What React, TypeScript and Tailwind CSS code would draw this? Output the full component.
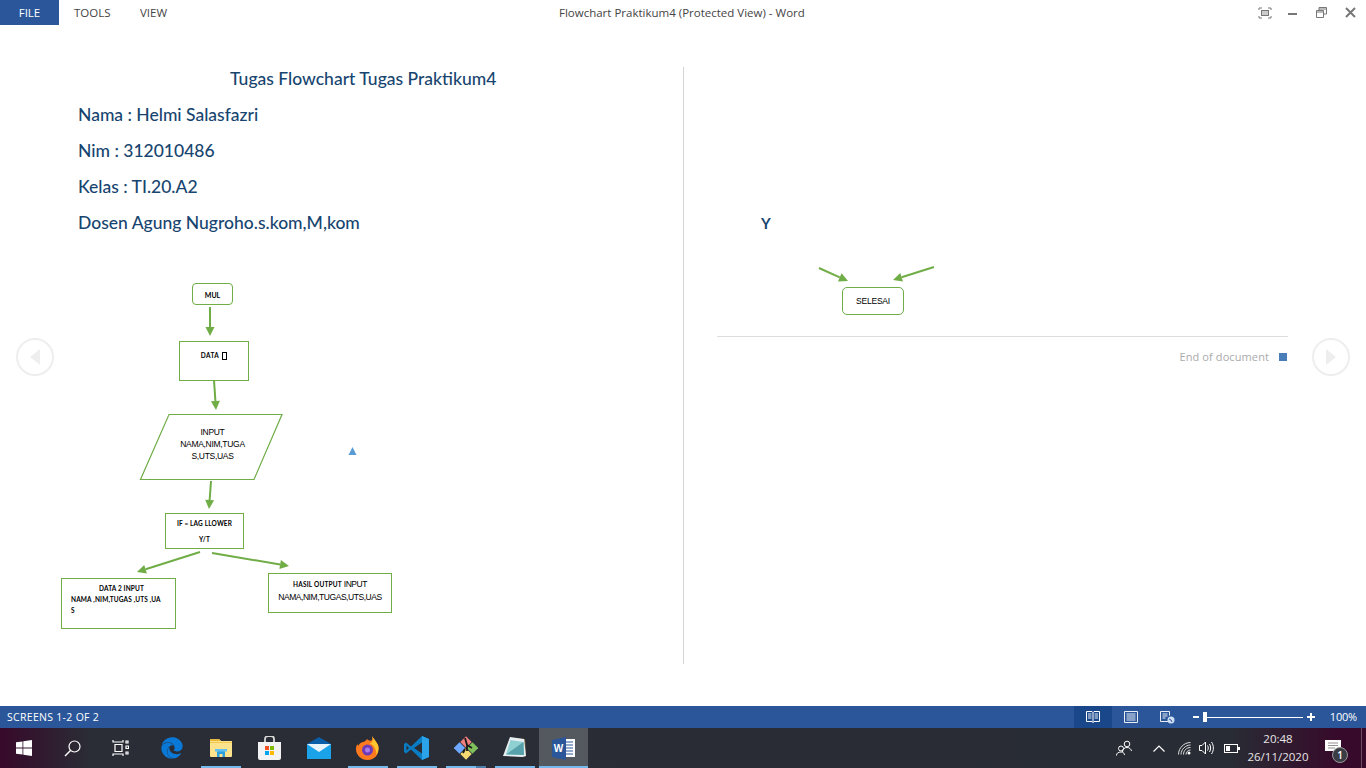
import React from 'react';
import { FaEdge } from 'react-icons/fa';

const Arrow = ({ x1, y1, x2, y2 }: { x1: number; y1: number; x2: number; y2: number }) => {
  const a = Math.atan2(y2 - y1, x2 - x1);
  const len = 9;
  const w = 4.5;
  const bx = x2 - Math.cos(a) * len;
  const by = y2 - Math.sin(a) * len;
  const nx = -Math.sin(a) * w;
  const ny = Math.cos(a) * w;
  return (
    <g>
      <line x1={x1} y1={y1} x2={bx} y2={by} stroke="#70ad47" strokeWidth="2" />
      <polygon points={`${x2},${y2} ${bx + nx},${by + ny} ${bx - nx},${by - ny}`} fill="#70ad47" />
    </g>
  );
};

const NavCircle = ({ dir }: { dir: 'left' | 'right' }) => (
  <div className="flex h-[38px] w-[38px] items-center justify-center rounded-full border-2 border-[#eeeeee] bg-white">
    <svg width="12" height="18" viewBox="0 0 12 18">
      <polygon points={dir === 'left' ? '11,1 11,17 1,9' : '1,1 1,17 11,9'} fill="#eeeeee" />
    </svg>
  </div>
);

const TaskCell = ({ children, active, bar, split }: { children: React.ReactNode; active?: boolean; bar?: boolean; split?: boolean }) => (
  <div className={active ? 'relative flex h-full w-[49px] items-center justify-center bg-[#54585f]' : 'relative flex h-full w-[49px] items-center justify-center'}>
    {children}
    {bar && <div className={active ? 'absolute bottom-0 left-0 h-0.5 w-full bg-[#76b9ed]' : 'absolute bottom-0 left-[5px] h-0.5 w-10 bg-[#76b9ed]'} />}
    {split && <div className="absolute bottom-0 left-[35px] h-0.5 w-[10px] bg-[#4b7ea8]" />}
  </div>
);

export default function App() {
  return (
    <div className="relative flex h-[768px] w-[1366px] flex-col overflow-hidden bg-white font-['Open_Sans',sans-serif]">
      {/* Title bar */}
      <div className="flex h-[25px] shrink-0 items-center">
        <div className="flex h-full w-[59px] items-center justify-center bg-[#2b579a] text-[11.5px] text-white">FILE</div>
        <div className="ml-[15px] w-[37px] whitespace-nowrap text-[11.5px] text-[#444444]">TOOLS</div>
        <div className="ml-[29px] w-[27px] whitespace-nowrap text-[11.5px] text-[#444444]">VIEW</div>
        <div className="ml-[392px] w-[245px] whitespace-nowrap text-center text-[11.5px] text-[#444444]">Flowchart Praktikum4 (Protected View) - Word</div>
        <div className="ml-auto flex items-center pr-[10px]">
          <svg width="14" height="12" viewBox="0 0 14 12" className="mr-[16px]">
            <path d="M1 3V1h3M10 1h3v2M13 9v2h-3M4 11H1V9" fill="none" stroke="#777" />
            <rect x="3.5" y="3.5" width="7" height="5" fill="#ccc" stroke="#777" />
          </svg>
          <svg width="10" height="10" viewBox="0 0 10 10" className="mr-[18px]">
            <rect x="0" y="5" width="9" height="2" fill="#777" />
          </svg>
          <svg width="11" height="11" viewBox="0 0 11 11" className="mr-[18px]">
            <path d="M.5 3.500h7v7h-7zM.5 5h7M3 3V.5h7.500V7H8M3 2h7.500" fill="none" stroke="#777" />
          </svg>
          <svg width="11" height="11" viewBox="0 0 11 11">
            <path d="M1 1l9 9M10 1l-9 9" stroke="#777" strokeWidth="2" />
          </svg>
        </div>
      </div>

      {/* Document */}
      <div className="relative flex min-h-0 flex-1">
        {/* Left page */}
        <div className="w-[683px] shrink-0 pt-9 font-['Lato',sans-serif] font-medium text-[#17456f]">
          <div className="flex h-9 items-center pl-[230px] text-[17.5px]">Tugas Flowchart Tugas Praktikum4</div>
          <div className="flex h-9 items-center pl-[78px] text-[17.5px]">Nama : Helmi Salasfazri</div>
          <div className="flex h-9 items-center pl-[78px] text-[17.5px]">Nim : 312010486</div>
          <div className="flex h-9 items-center pl-[78px] text-[17.5px]">Kelas : TI.20.A2</div>
          <div className="flex h-9 items-center pl-[78px] text-[17.5px]">Dosen Agung Nugroho.s.kom,M,kom</div>

          {/* Flowchart canvas: y here is page y minus 241 */}
          <div className="relative h-[420px] font-normal text-black">
            <svg className="absolute left-0 top-0" width="420" height="420" viewBox="0 241 420 420">
              <Arrow x1={210} y1={307} x2={210} y2={336} />
              <Arrow x1={214} y1={380} x2={216} y2={410} />
              <polygon points="169,414.5 282,414.5 254,479.5 140.5,479.5" fill="none" stroke="#70ad47" strokeWidth="1.2" />
              <Arrow x1={211} y1={481} x2={209} y2={509} />
              <Arrow x1={200} y1={552} x2={137} y2={572} />
              <Arrow x1={212} y1={553} x2={289} y2={566} />
              <polygon points="352.5,447 356.5,455 348.5,455" fill="#5b9bd5" />
            </svg>
            <div className="absolute left-[192px] top-[42px] flex h-[22px] w-[41px] items-center justify-center rounded-[4px] border border-[#70ad47] pt-[2px] text-[7px] font-bold">MUL</div>
            <div className="absolute left-[179px] top-[100px] flex h-[40px] w-[70px] items-start justify-center border border-[#70ad47] pt-[8px] text-[6.5px] font-bold leading-[12px] tracking-[0.4px]">
              DATA
              <span className="ml-[3px] mt-[2px] inline-block h-[8px] w-[5px] border border-black" />
            </div>
            <div className="absolute left-[160px] top-[185px] w-[105px] text-center font-['Liberation_Sans',sans-serif] text-[8.5px] leading-[12px] tracking-[-0.3px]">
              <div>INPUT</div>
              <div>NAMA,NIM,TUGA</div>
              <div>S,UTS,UAS</div>
            </div>
            <div className="absolute left-[165px] top-[272px] h-[36px] w-[79px] border border-[#70ad47] pt-[4px] text-center text-[6.5px] font-bold leading-[12px] tracking-[0.15px]">
              <div>IF = LAG LLOWER</div>
              <div className="mt-[4px]">Y/T</div>
            </div>
            <div className="absolute left-[61px] top-[337px] h-[51px] w-[115px] whitespace-nowrap border border-[#70ad47] pl-[9px] pt-[4px] text-[6.5px] font-bold leading-[11px] tracking-[0.15px]">
              <div className="pl-[28px]">DATA 2 INPUT</div>
              <div>NAMA ,NIM,TUGAS ,UTS ,UA</div>
              <div>S</div>
            </div>
            <div className="absolute left-[268px] top-[332px] h-[40px] w-[124px] border border-[#70ad47] pt-[4px] text-center font-['Liberation_Sans',sans-serif] text-[8.5px] leading-[12px] tracking-[-0.45px]">
              <div><span className="font-['Lato',sans-serif] text-[6.5px] font-bold tracking-[0.2px]">HASIL OUTPUT</span> INPUT</div>
              <div>NAMA,NIM,TUGAS,UTS,UAS</div>
            </div>
          </div>
        </div>

        <div className="mt-[42px] h-[597px] w-px shrink-0 bg-[#d4d4d4]" />

        {/* Right page */}
        <div className="flex-1 pl-[33px] pt-[180px]">
          <div className="w-[571px]">
            <div className="flex h-9 items-center pl-[44px] font-['Lato',sans-serif] text-[15px] font-bold text-[#17456f]">Y</div>
            <div className="relative h-[96px] border-b border-[#dddddd]">
              <svg className="absolute left-0 top-0" width="300" height="60" viewBox="717 241 300 60">
                <Arrow x1={819} y1={268} x2={848} y2={281} />
                <Arrow x1={934} y1={267} x2={893} y2={280} />
              </svg>
              <div className="absolute left-[125px] top-[46px] flex h-[28px] w-[62px] items-center justify-center rounded-[5px] border border-[#70ad47] font-['Liberation_Sans',sans-serif] text-[8.5px] tracking-[-0.2px] text-black">SELESAI</div>
            </div>
            <div className="flex h-10 items-center justify-end pr-px">
              <span className="mr-[10px] text-[11px] tracking-[0.1px] text-[#aaaaaa]">End of document</span>
              <div className="h-2 w-2 bg-[#4a7ebb]" />
            </div>
          </div>
        </div>

        {/* Page nav arrows */}
        <div className="absolute left-4 top-[313px]"><NavCircle dir="left" /></div>
        <div className="absolute left-[1312px] top-[313px]"><NavCircle dir="right" /></div>
      </div>

      {/* Status bar */}
      <div className="flex h-[22px] shrink-0 items-center bg-[#2b579a] text-white">
        <div className="pl-[7px] pt-px text-[10.5px] tracking-[0.3px]">SCREENS 1-2 OF 2</div>
        <div className="ml-auto flex h-full items-center">
          <div className="flex h-full w-[38px] items-center justify-center bg-[#19478a]">
            <svg width="14" height="12" viewBox="0 0 14 12" fill="none" stroke="#fff">
              <path d="M.5.5h5.500L7 1.500 8 .5h5.500v10H8L7 11.500 6 10.500H.5zM7 1.500v10" />
              <path d="M2 3h3.500M2 5h3.500M2 7h3.500M8.500 3H12M8.500 5H12M8.500 7H12" strokeWidth="0.9" />
            </svg>
          </div>
          <div className="flex h-full w-[38px] items-center justify-center">
            <svg width="14" height="12" viewBox="0 0 14 12" fill="none" stroke="#fff">
              <path d="M.5.5h13v11H.5zM2.500 3h9M2.500 5h9M2.500 7h9M2.500 9h9" strokeWidth="0.9" />
            </svg>
          </div>
          <div className="flex h-full w-[36px] items-center justify-center">
            <svg width="15" height="13" viewBox="0 0 15 13" fill="none" stroke="#fff">
              <path d="M8 10.500H.5V.5h9v4M2.500 3h5M2.500 5h5M2.500 7h3" strokeWidth="0.9" />
              <circle cx="11" cy="9" r="3.500" fill="#cfe0f5" stroke="none" />
              <path d="M9 8l2 1 1 2" stroke="#2b579a" strokeWidth="1" />
            </svg>
          </div>
          <div className="ml-[7px] h-0.5 w-[6px] bg-white" />
          <div className="relative ml-[4px] flex h-full w-[100px] items-center">
            <div className="h-px w-full bg-white" />
            <div className="absolute left-0 top-[6px] h-[10px] w-[4px] bg-white" />
          </div>
          <svg width="8" height="8" viewBox="0 0 8 8" className="ml-[4px]">
            <path d="M0 4h8M4 0v8" stroke="#fff" strokeWidth="2" />
          </svg>
          <div className="ml-[15px] pr-[9px] text-[11px] tracking-[-0.2px]">100%</div>
        </div>
      </div>

      {/* Taskbar */}
      <div className="flex h-10 shrink-0 items-center bg-[linear-gradient(90deg,#37092a_0px,#2a2d35_90px,#282c34_1230px,#37092a_1340px,#37092a_100%)] text-white">
        <div className="flex h-full w-12 items-center justify-center">
          <svg width="16" height="16" viewBox="0 0 16 16" fill="#fff">
            <path d="M0 2.300l6.500-.9v6.200H0zM7.300 1.300L16 0v7.600H7.300zM0 8.400h6.500v6.200L0 13.700zM7.300 8.400H16V16l-8.700-1.200z" />
          </svg>
        </div>
        <div className="flex h-full w-12 items-center justify-center">
          <svg width="17" height="17" viewBox="0 0 17 17" fill="none" stroke="#fff" strokeWidth="1.200">
            <circle cx="10.500" cy="6.500" r="5.500" />
            <path d="M6.500 10.500L1 16" strokeWidth="1.500" />
          </svg>
        </div>
        <div className="flex h-full w-[51px] items-center justify-center pr-[3px]">
          <svg width="17" height="16" viewBox="0 0 17 16" fill="none" stroke="#fff" strokeWidth="1.200">
            <path d="M1 0v2h10V0M3 4.500h7v7H3zM1 16v-2h10v2M14 1h2v2h-2zM14 6h2.500v2.500H14zM14 12h2v2h-2z" />
          </svg>
        </div>
        <TaskCell>
          <FaEdge size={22} color="#0a78d6" />
        </TaskCell>
        <TaskCell bar>
          <svg width="22" height="20" viewBox="0 0 22 20">
            <path d="M0 1h9l2 2h11v15a1 1 0 0 1-1 1H1a1 1 0 0 1-1-1z" fill="#ffe38c" />
            <path d="M0 1h9l2 2H0z" fill="#e8b83e" />
            <rect x="0" y="4" width="22" height="1" fill="#f2c94f" />
            <path d="M7 19v-5a1 1 0 0 1 1-1h6a1 1 0 0 1 1 1v5h-2.500v-3h-3v3z" fill="#2c9fe0" />
            <rect x="5" y="11" width="12" height="2.500" fill="#60c0f0" />
          </svg>
        </TaskCell>
        <TaskCell>
          <svg width="23" height="24" viewBox="0 0 23 24">
            <path d="M7 7V3a3 3 0 0 1 3-3h3a3 3 0 0 1 3 3v4" fill="none" stroke="#d8d8d8" strokeWidth="1.800" />
            <path d="M0 6h23v16a2 2 0 0 1-2 2H2a2 2 0 0 1-2-2z" fill="#f3f3f3" />
            <rect x="7" y="10" width="4" height="4" fill="#f25022" />
            <rect x="12" y="10" width="4" height="4" fill="#7fba00" />
            <rect x="7" y="15" width="4" height="4" fill="#00a4ef" />
            <rect x="12" y="15" width="4" height="4" fill="#ffb900" />
          </svg>
        </TaskCell>
        <TaskCell>
          <svg width="24" height="22" viewBox="0 0 24 22">
            <path d="M12 0l12 7H0z" fill="#0a5ea8" />
            <rect x="0" y="7" width="24" height="15" fill="#1aa3e8" />
            <path d="M0 7h24L12 15z" fill="#e8f3fb" />
          </svg>
        </TaskCell>
        <TaskCell bar>
          <svg width="23" height="24" viewBox="0 0 23 24">
            <path d="M16 0c1 2 4 5 6 9 2 6-1 15-10.500 15C5 24 0 19 0 13c0-2 .5-4 1.500-5 0 1 .5 1.500 1 1.500 1-2 3-3.500 5-3.500 2-1 3-2 3.500-3 2 2 4 2 5 1 .5-1 .5-2.500 0-4z" fill="#ff7a1f" />
            <path d="M16 0c1 2 4 5 6 9 1 3 .5 7-1.500 10 0-6-3-10-7-12 2 0 3-1 3-2 .5-1 .5-2.500-.5-5z" fill="#ffc52e" />
            <circle cx="11.500" cy="14" r="5.500" fill="#6e3bb8" />
            <circle cx="11.500" cy="14" r="2.500" fill="#a87be8" />
          </svg>
        </TaskCell>
        <TaskCell bar>
          <svg width="25" height="24" viewBox="0 0 25 24">
            <path d="M18 0l7 3v18l-7 3-11-10.500L2 17.500 0 16v-8l2-1.500 5 4z" fill="#0a7cc4" />
            <path d="M18 0l7 3v18l-7 3z" fill="#2aa3e8" />
            <path d="M18 6.500L10 12l8 5.500z" fill="#282c34" />
            <path d="M2.500 9.500L5 12l-2.500 2.500z" fill="#282c34" />
          </svg>
        </TaskCell>
        <TaskCell bar split>
          <svg width="24" height="24" viewBox="0 0 24 24">
            <rect x="8" y="2" width="8" height="8" transform="rotate(45 12 6)" fill="#ef7f7f" />
            <rect x="1.500" y="8" width="8" height="8" transform="rotate(45 5.500 12)" fill="#6ea8ff" />
            <rect x="14.500" y="8" width="8" height="8" transform="rotate(45 18.500 12)" fill="#7fc05a" />
            <rect x="8" y="14" width="8" height="8" transform="rotate(45 12 18)" fill="#f5dc72" />
            <path d="M11 2l2 7v6M13 9l5 3M11 13l-2 4" stroke="#1a1a1a" strokeWidth="1.800" fill="none" />
          </svg>
        </TaskCell>
        <TaskCell bar>
          <svg width="24" height="22" viewBox="0 0 24 22">
            <path d="M7 1l15 1 1 17-3 1z" fill="#8c7a55" />
            <path d="M7 0l14 2 2 17L19 20 0 19z" fill="#e8eff2" />
            <path d="M7.500 3l13 2 .500 13L3 17.500z" fill="#8fd0d2" />
            <path d="M3 17.500L20.500 5l.500 13z" fill="#3f8f98" opacity=".7" />
          </svg>
        </TaskCell>
        <TaskCell active bar>
          <svg width="23" height="23" viewBox="0 0 23 23">
            <rect x="9" y="2" width="14" height="18" fill="#fff" />
            <path d="M11 5h10M11 8h10M11 11h10M11 14h10M11 17h10" stroke="#2b579a" strokeWidth="1.200" />
            <path d="M0 3l14-3v23L0 20z" fill="#2b579a" />
            <text x="6.500" y="15" textAnchor="middle" fontSize="10" fontWeight="700" fill="#fff" fontFamily="'Liberation Sans', sans-serif">W</text>
          </svg>
        </TaskCell>

        {/* Tray */}
        <div className="ml-auto flex h-full items-center">
          <svg width="16" height="16" viewBox="0 0 16 16" fill="none" stroke="#fff" strokeWidth="1">
            <circle cx="11" cy="4" r="2.800" />
            <path d="M6.500 12c0-3 2-4.500 4.500-4.500S15 9 15.500 11" />
            <circle cx="5" cy="8.500" r="2.500" />
            <path d="M.5 15.500c0-2.500 2-3.500 4.500-3.500s3 1 3.500 3" />
          </svg>
          <svg width="12" height="7" viewBox="0 0 12 7" className="ml-[21px]" fill="none" stroke="#fff" strokeWidth="1.200">
            <path d="M.5 6.500L6 1l5.500 5.500" />
          </svg>
          <svg width="13" height="13" viewBox="0 0 13 13" className="ml-[13px]" fill="none" stroke="#dddddd" strokeWidth="1">
            <path d="M.5 12.500C.5 6 6 .5 12.500.5M3 12.500C3 7.500 7.500 3 12.500 3M5.500 12.500c0-4 3-7 7-7M8 12.500c0-2.500 2-4.500 4.500-4.500" />
            <circle cx="11" cy="11" r="1.500" fill="#fff" stroke="none" />
          </svg>
          <svg width="16" height="14" viewBox="0 0 16 14" className="ml-[8px]" fill="none" stroke="#fff" strokeWidth="1">
            <path d="M.5 4.500h2.500L6.500 1v12L3 9.500H.5zM8.500 4.500c1 1.500 1 3.500 0 5M10.500 3c1.500 2.500 1.500 5.500 0 8M12.500 1c2.500 3.500 2.500 8.500 0 12" />
          </svg>
          <svg width="16" height="9" viewBox="0 0 16 9" className="ml-[9px]" fill="none" stroke="#fff">
            <rect x=".5" y=".5" width="13" height="8" />
            <rect x="2" y="2" width="4" height="5" fill="#fff" stroke="none" />
            <rect x="14" y="3" width="2" height="3" fill="#fff" stroke="none" />
          </svg>
          <div className="ml-[3px] w-[70px] text-center text-[11.5px] leading-[18px] text-[#e6e6e6]">
            <div>20:48</div>
            <div className="whitespace-nowrap">26/11/2020</div>
          </div>
          <div className="relative ml-[12px] mr-[12px] h-[30px] w-6">
            <svg className="absolute left-0 top-[7px]" width="17" height="15" viewBox="0 0 17 15">
              <path d="M0 0h16v11h-5l-2 3-1-3H0z" fill="#fff" />
              <path d="M3 3h10M3 5.500h10M3 8h7" stroke="#777" strokeWidth="0.8" />
            </svg>
            <div className="absolute left-[7px] top-[14px] flex h-[16px] w-[16px] items-center justify-center rounded-full border border-[#999] bg-[#3a3d44] text-[10px] font-semibold">1</div>
          </div>
          <div className="h-full w-px bg-[#6a5060]" />
          <div className="h-full w-1" />
        </div>
      </div>
    </div>
  );
}
